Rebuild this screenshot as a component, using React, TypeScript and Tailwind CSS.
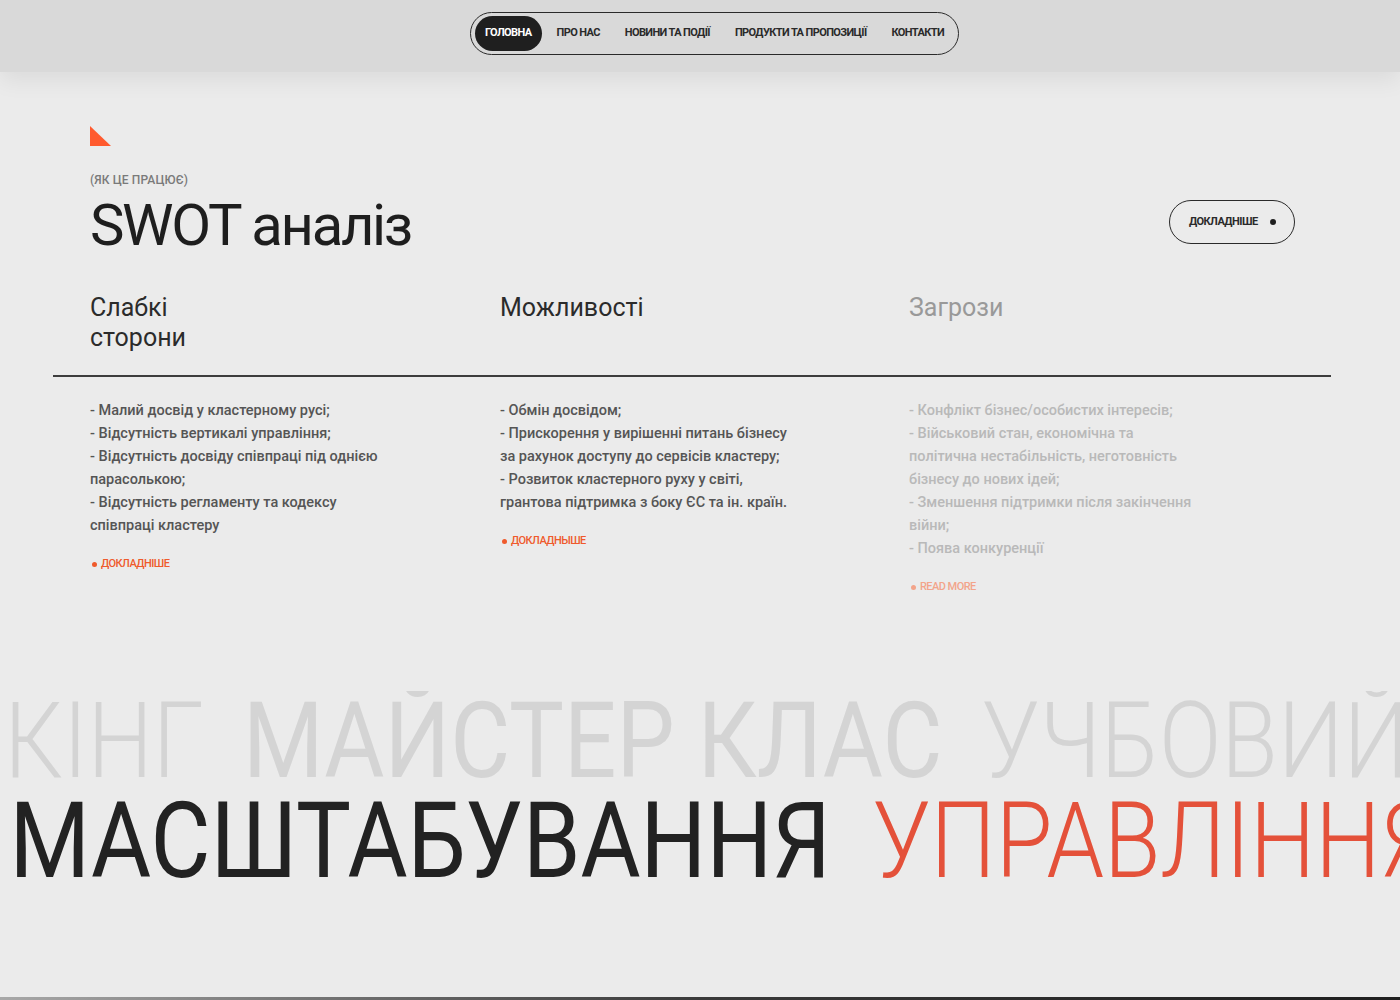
import React from "react";

const navItems = ["ГОЛОВНА", "ПРО НАС", "НОВИНИ ТА ПОДІЇ", "ПРОДУКТИ ТА ПРОПОЗИЦІЇ", "КОНТАКТИ"];

type Col = { title: string[]; items: string[]; link: string; faded?: boolean };

const cols: Col[] = [
  {
    title: ["Слабкі", "сторони"],
    items: [
      "- Малий досвід у кластерному русі;",
      "- Відсутність вертикалі управління;",
      "- Відсутність досвіду співпраці під однією парасолькою;",
      "- Відсутність регламенту та кодексу співпраці кластеру",
    ],
    link: "ДОКЛАДНІШЕ",
  },
  {
    title: ["Можливості"],
    items: [
      "- Обмін досвідом;",
      "- Прискорення у вирішенні питань бізнесу за рахунок доступу до сервісів кластеру;",
      "- Розвиток кластерного руху у світі, грантова підтримка з боку ЄС та ін. країн.",
    ],
    link: "ДОКЛАДНЫШЕ",
  },
  {
    title: ["Загрози"],
    items: [
      "- Конфлікт бізнес/особистих інтересів;",
      "- Військовий стан, економічна та політична нестабільність, неготовність бізнесу до нових ідей;",
      "- Зменшення підтримки після закінчення війни;",
      "- Поява конкуренції",
    ],
    link: "READ MORE",
    faded: true,
  },
];

export default function App() {
  return (
    <div className="w-full overflow-hidden bg-[#ebebeb] font-['Roboto','Liberation_Sans',sans-serif]">
      <div className="h-[997px] overflow-hidden">
        <header className="relative z-10 flex h-[72px] items-start justify-center bg-[#d9d9d9] pl-[29px] pt-[12px] shadow-[0_8px_22px_rgba(0,0,0,0.07)]">
          <nav className="flex h-[43px] items-center gap-[5px] rounded-full border-[1.5px] border-[#2a2a2a] px-[3.5px]">
            {navItems.map((n, i) => (
              <span
                key={n}
                className={
                  "flex h-[35px] items-center rounded-full px-[10px] text-[11px] font-bold tracking-[-0.055em] " +
                  (i === 0 ? "bg-[#1f1f1f] text-white" : "text-[#2a2a2a]")
                }
              >
                {n}
              </span>
            ))}
          </nav>
        </header>

        <section className="px-[90px] pt-[54px]">
          <div className="h-0 w-0 -scale-x-100 border-b-[20px] border-l-[21px] border-b-[#ff5a2e] border-l-transparent" />
          <div className="mt-[25px] flex items-start justify-between">
            <div>
              <div className="text-[12px] font-medium tracking-[0.01em] text-[#7a7a7a]">(ЯК ЦЕ ПРАЦЮЄ)</div>
              <h1 className="mt-[7px] text-[58px] leading-none font-normal tracking-[-0.04em] text-[#1e1e1e]">SWOT аналіз</h1>
            </div>
            <button className="mr-[15px] mt-[29px] flex h-[44px] w-[126px] items-center justify-between rounded-full border-[1.5px] border-[#2a2a2a] pl-[19px] pr-[18px] text-[11px] font-bold tracking-[-0.05em] text-[#2a2a2a]">
              ДОКЛАДНІШЕ
              <span className="h-[6px] w-[6px] rounded-full bg-[#1f1f1f]" />
            </button>
          </div>
        </section>

        <section className="mt-[39px]">
          <div className="grid px-[90px]" style={{ gridTemplateColumns: "410px 409px 1fr" }}>
            {cols.map((c) => (
              <h2
                key={c.title[0]}
                className={"h-[82px] text-[25px] leading-[30px] font-normal " + (c.faded ? "text-[#999999]" : "text-[#2b2b2b]")}
              >
                {c.title.map((t) => (
                  <div key={t}>{t}</div>
                ))}
              </h2>
            ))}
          </div>
          <div className="mx-[53px] h-[2px] w-[1278px] bg-[#3d3d3d]" />
          <div className="grid px-[90px] pt-[22px]" style={{ gridTemplateColumns: "410px 409px 1fr" }}>
            {cols.map((c) => (
              <div key={c.title[0]}>
                <ul className={"w-[290px] text-[14.5px] leading-[23px] font-medium " + (c.faded ? "text-[#b9b9b9]" : "text-[#555555]")}>
                  {c.items.map((it) => (
                    <li key={it}>{it}</li>
                  ))}
                </ul>
                <div className={"mt-[19px] flex items-center gap-[4px] pl-[2px] text-[11px] font-medium tracking-[-0.05em] " + (c.faded ? "text-[#f3a48a]" : "text-[#ef5a2c]")}>
                  <span className={"h-[5px] w-[5px] rounded-full " + (c.faded ? "bg-[#f3a48a]" : "bg-[#ef5a2c]")} />
                  {c.link}
                </div>
              </div>
            ))}
          </div>
        </section>

        <section className="mt-[95px] overflow-hidden">
          <div className="flex origin-left scale-x-[0.87] whitespace-nowrap text-[106px] leading-[100px] text-[#d4d4d4]">
            <div className="-ml-[397px] flex gap-[45px]">
              <span className="font-light">НЕТВОРКІНГ</span>
              <span className="font-normal">МАЙСТЕР КЛАС</span>
              <span className="font-light">УЧБОВИЙ ЦЕНТР</span>
            </div>
          </div>
          <div className="flex origin-left scale-x-[0.87] whitespace-nowrap text-[106px] leading-[100px]">
            <div className="ml-[11px] flex gap-[48px]">
              <span className="font-normal text-[#222222]">МАСШТАБУВАННЯ</span>
              <span className="font-light text-[#e4513a]">УПРАВЛІННЯ</span>
            </div>
          </div>
        </section>
      </div>
      <div className="h-[6px] w-full bg-gradient-to-r from-[#a8a8a8] via-[#3a3a3a] to-[#1f1f1f]" />
    </div>
  );
}
